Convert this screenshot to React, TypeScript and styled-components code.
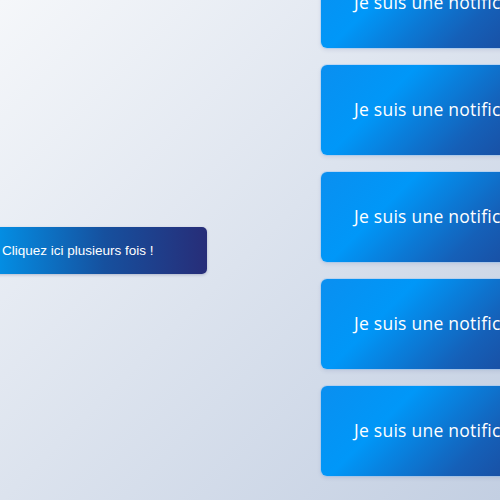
import React from "react";
import styled, { createGlobalStyle } from "styled-components";

const Global = createGlobalStyle`
  html, body { margin: 0; padding: 0; height: 100%; overflow: hidden; }
  body { background: linear-gradient(135deg, #f5f7fa 0%, #c3cfe2 100%); }
  #root { height: 100%; }
`;

const Page = styled.div`
  height: 500px;
  width: 500px;
  display: flex;
  align-items: flex-start;
  overflow: hidden;
`;

const ButtonArea = styled.div`
  width: 321px;
  flex: none;
  height: 500px;
  display: flex;
  align-items: center;
`;

const TriggerButton = styled.button`
  margin-left: -20px;
  margin-top: 1px;
  width: 227px;
  height: 47px;
  padding: 0 0 0 22px;
  border: none;
  border-radius: 5px;
  background: linear-gradient(to right, #0099f0 0%, #16509e 55%, #272d78 100%);
  color: #ffffff;
  font-family: "Liberation Sans", Arial, sans-serif;
  font-size: 13.5px;
  text-align: left;
  box-shadow: 0 1px 3px rgba(30, 40, 90, 0.25);
  cursor: pointer;
`;

const Stack = styled.div`
  flex: none;
  margin-top: -42px;
  display: flex;
  flex-direction: column;
  gap: 17px;
`;

const Toast = styled.div`
  width: 260px;
  height: 90px;
  box-sizing: border-box;
  padding-left: 33px;
  padding-bottom: 2px;
  display: flex;
  align-items: center;
  border-radius: 6px;
  background: linear-gradient(135deg, #0a8ff0 0%, #0097f8 28%, #1560b8 62%, #1e3a8a 100%);
  color: #ffffff;
  font-family: "Open Sans", "Noto Sans", sans-serif;
  font-size: 17.5px;
  letter-spacing: 0.25px;
  white-space: nowrap;
  box-shadow: 0 0 0 1px rgba(120, 190, 255, 0.3), 0 2px 4px rgba(40, 60, 120, 0.12);
`;

export default function App() {
  const toasts = [0, 1, 2, 3, 4];
  return (
    <>
      <Global />
      <Page>
        <ButtonArea>
          <TriggerButton>Cliquez ici plusieurs fois !</TriggerButton>
        </ButtonArea>
        <Stack>
          {toasts.map((i) => (
            <Toast key={i}>Je suis une notification</Toast>
          ))}
        </Stack>
      </Page>
    </>
  );
}
